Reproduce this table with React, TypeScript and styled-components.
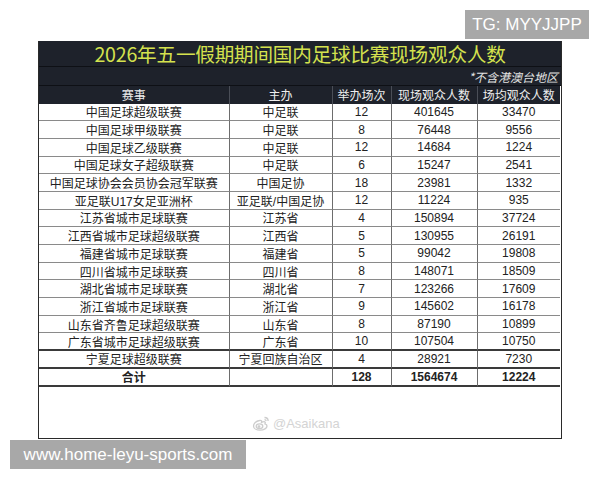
import React from "react";
import styled, { createGlobalStyle } from "styled-components";

const Global = createGlobalStyle`
  html, body { margin: 0; padding: 0; background: #ffffff; }
  body { font-family: "Liberation Sans", "Noto Sans CJK SC", sans-serif; }
`;

const Page = styled.div`
  position: relative;
  width: 600px;
  height: 480px;
  padding: 41px 0 0 38px;
  box-sizing: border-box;
  overflow: hidden;
`;

const Card = styled.div`
  position: relative;
  width: 524px;
  display: flex;
  flex-direction: column;
  border-left: 1.5px solid #2a2a2a;
  border-right: 1.5px solid #2a2a2a;
  border-bottom: 1.5px solid #2a2a2a;
  box-sizing: border-box;
  background: #fff;
`;

const TitleRow = styled.div`
  height: 26px;
  background: #1e222b;
  display: flex;
  align-items: center;
  justify-content: center;
  color: #d5e24e;
  font-family: "Noto Sans CJK SC", sans-serif;
  font-size: 19.6px;
  letter-spacing: -0.2px;
  border-bottom: 1px solid #0e1015;
  box-sizing: border-box;
`;

const SubRow = styled.div`
  height: 19px;
  background: #1e222b;
  display: flex;
  align-items: center;
  justify-content: flex-end;
  padding-right: 3px;
  color: #e2e2e2;
  font-family: "Noto Sans CJK SC", sans-serif;
  font-size: 12px;
  font-style: italic;
  border-bottom: 1px solid #0e1015;
  box-sizing: border-box;
`;

const Grid = styled.div`
  display: grid;
  grid-template-columns: 190.5px 103px 59px 86px 82.5px;
`;

const HeadCell = styled.div<{ $last?: boolean }>`
  height: 17.5px;
  background: #1e222b;
  color: #eeeeee;
  font-family: "Noto Sans CJK SC", sans-serif;
  font-size: 12px;
  display: flex;
  align-items: center;
  justify-content: center;
  border-right: ${(p) => (p.$last ? "none" : "1px solid #4a4e57")};
  box-sizing: border-box;
`;

const Cell = styled.div<{ $last?: boolean; $thick?: boolean; $bold?: boolean }>`
  height: 17.7px;
  color: #222;
  font-family: "Liberation Sans", "Noto Sans CJK SC", sans-serif;
  font-size: 12px;
  font-weight: ${(p) => (p.$bold ? 700 : 400)};
  display: flex;
  align-items: center;
  justify-content: center;
  border-right: ${(p) => (p.$last ? "none" : "1px solid #6d6d6d")};
  border-bottom: ${(p) => (p.$thick ? "2px solid #3a3a3a" : "1px solid #8a8a8a")};
  box-sizing: border-box;
  white-space: nowrap;
`;

const Footer = styled.div`
  height: 51px;
  position: relative;
`;

const Watermark = styled.div`
  position: absolute;
  left: 213px;
  top: 29px;
  display: flex;
  align-items: center;
  gap: 3px;
  color: #d0d0d0;
  font-family: "Liberation Sans", sans-serif;
  font-size: 13px;
  text-shadow: 0 0 1px #fff, 0 0 1px #fff;
  opacity: 0.9;
`;

const Badge = styled.div`
  position: absolute;
  background: #a8a8a8;
  color: #ffffff;
  font-family: "Liberation Sans", sans-serif;
  font-size: 17px;
  height: 29px;
  display: flex;
  align-items: center;
  justify-content: center;
  box-sizing: border-box;
`;

const TgBadge = styled(Badge)`
  left: 465px;
  top: 10px;
  width: 124px;
`;

const UrlBadge = styled(Badge)`
  left: 10px;
  top: 440px;
  width: 236px;
`;

type Row = [string, string, string, string, string];

const rows: Row[] = [
  ["中国足球超级联赛", "中足联", "12", "401645", "33470"],
  ["中国足球甲级联赛", "中足联", "8", "76448", "9556"],
  ["中国足球乙级联赛", "中足联", "12", "14684", "1224"],
  ["中国足球女子超级联赛", "中足联", "6", "15247", "2541"],
  ["中国足球协会会员协会冠军联赛", "中国足协", "18", "23981", "1332"],
  ["亚足联U17女足亚洲杯", "亚足联/中国足协", "12", "11224", "935"],
  ["江苏省城市足球联赛", "江苏省", "4", "150894", "37724"],
  ["江西省城市足球超级联赛", "江西省", "5", "130955", "26191"],
  ["福建省城市足球联赛", "福建省", "5", "99042", "19808"],
  ["四川省城市足球联赛", "四川省", "8", "148071", "18509"],
  ["湖北省城市足球联赛", "湖北省", "7", "123266", "17609"],
  ["浙江省城市足球联赛", "浙江省", "9", "145602", "16178"],
  ["山东省齐鲁足球超级联赛", "山东省", "8", "87190", "10899"],
  ["广东省城市足球超级联赛", "广东省", "10", "107504", "10750"],
  ["宁夏足球超级联赛", "宁夏回族自治区", "4", "28921", "7230"],
];

const total: Row = ["合计", "", "128", "1564674", "12224"];
const headers = ["赛事", "主办", "举办场次", "现场观众人数", "场均观众人数"];

const WeiboIcon = () => (
  <svg width="18" height="16" viewBox="0 0 18 16" fill="none" stroke="#c8c8c8" strokeWidth="1.3">
    <path d="M7.5 4.5C4 5 1.5 7.5 1.5 10c0 2.5 3 4.2 6.5 4.2 4 0 7-2 7-4.3 0-1.3-1.2-1.8-2-2 .5-1 .4-2-.8-2.2-.9-.1-2 .4-2.6.6.3-1 .2-2.200-2.1-1.8z" />
    <ellipse cx="7.5" cy="10.3" rx="3.3" ry="2.4" />
    <circle cx="7" cy="10.6" r="0.8" fill="#c8c8c8" />
    <path d="M12.5 1.5c2 0 3.6 1.5 3.6 3.4M12.5 3.6c.9 0 1.6.6 1.6 1.4" />
  </svg>
);

export default function App() {
  return (
    <>
      <Global />
      <Page>
        <Card>
          <TitleRow>2026年五一假期期间国内足球比赛现场观众人数</TitleRow>
          <SubRow>*不含港澳台地区</SubRow>
          <Grid>
            {headers.map((h, i) => (
              <HeadCell key={h} $last={i === 4}>
                {h}
              </HeadCell>
            ))}
            {rows.map((r, ri) =>
              r.map((c, ci) => (
                <Cell key={`${ri}-${ci}`} $last={ci === 4} $thick={ri >= 13}>
                  {c}
                </Cell>
              ))
            )}
            {total.map((c, ci) => (
              <Cell key={`t-${ci}`} $last={ci === 4} $thick $bold>
                {c}
              </Cell>
            ))}
          </Grid>
          <Footer>
            <Watermark>
              <WeiboIcon />
              <span>@Asaikana</span>
            </Watermark>
          </Footer>
        </Card>
        <TgBadge>TG: MYYJJPP</TgBadge>
        <UrlBadge>www.home-leyu-sports.com</UrlBadge>
      </Page>
    </>
  );
}
